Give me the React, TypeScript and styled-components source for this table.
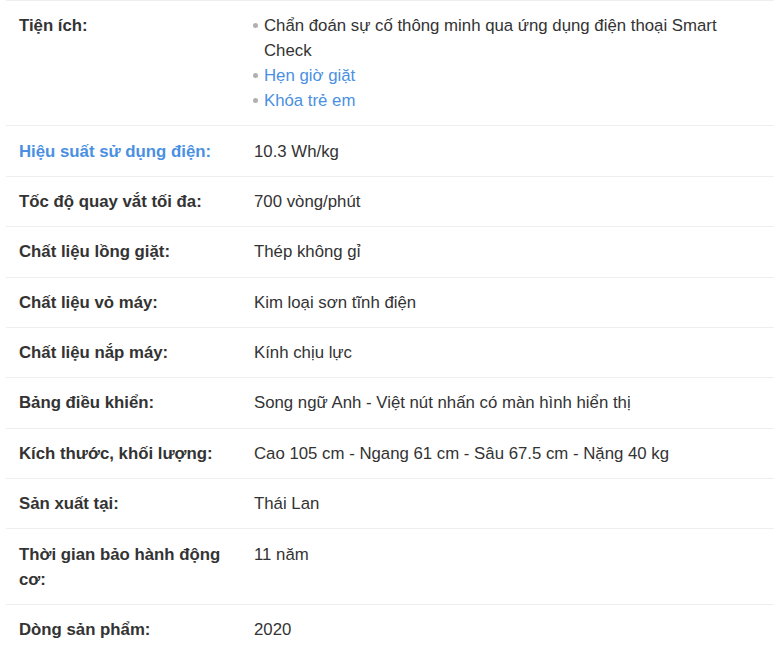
import React from "react";
import styled, { createGlobalStyle } from "styled-components";

const GlobalStyle = createGlobalStyle`
  html, body { margin: 0; padding: 0; background: #fff; }
  body { font-family: "Liberation Sans", Arial, sans-serif; }
`;

const Wrapper = styled.div`
  padding: 0 3px 0 6px;
`;

const Table = styled.div`
  border-top: 1px solid #eeeeee;
  width: 768px;
`;

const Row = styled.div`
  display: grid;
  grid-template-columns: 235px 1fr;
  border-bottom: 1px solid #eeeeee;
`;

const Label = styled.div<{ $link?: boolean }>`
  padding: 12.2px 12px 12.2px 13px;
  font-size: 16.8px;
  line-height: 25px;
  font-weight: 700;
  color: ${(p) => (p.$link ? "#4a90e2" : "#333333")};
`;

const Value = styled.div`
  padding: 12.2px 11px 12.2px 13px;
  font-size: 16.8px;
  line-height: 25px;
  color: #333333;
`;

const List = styled.ul`
  list-style: none;
  margin: 0;
  padding: 0;
`;

const Item = styled.li<{ $link?: boolean }>`
  position: relative;
  padding-left: 10px;
  color: ${(p) => (p.$link ? "#4a90e2" : "#333333")};
  &::before {
    content: "";
    position: absolute;
    left: -1px;
    top: 10px;
    width: 5px;
    height: 5px;
    border-radius: 50%;
    background: #b0b0b0;
  }
`;

const rows: { label: string; value: string; link?: boolean }[] = [
  { label: "Hiệu suất sử dụng điện:", value: "10.3 Wh/kg", link: true },
  { label: "Tốc độ quay vắt tối đa:", value: "700 vòng/phút" },
  { label: "Chất liệu lồng giặt:", value: "Thép không gỉ" },
  { label: "Chất liệu vỏ máy:", value: "Kim loại sơn tĩnh điện" },
  { label: "Chất liệu nắp máy:", value: "Kính chịu lực" },
  { label: "Bảng điều khiển:", value: "Song ngữ Anh - Việt nút nhấn có màn hình hiển thị" },
  { label: "Kích thước, khối lượng:", value: "Cao 105 cm - Ngang 61 cm - Sâu 67.5 cm - Nặng 40 kg" },
  { label: "Sản xuất tại:", value: "Thái Lan" },
  { label: "Thời gian bảo hành động cơ:", value: "11 năm" },
  { label: "Dòng sản phẩm:", value: "2020" },
];

export default function App() {
  return (
    <>
      <GlobalStyle />
      <Wrapper>
        <Table>
          <Row>
            <Label>Tiện ích:</Label>
            <Value>
              <List>
                <Item>Chẩn đoán sự cố thông minh qua ứng dụng điện thoại Smart Check</Item>
                <Item $link>Hẹn giờ giặt</Item>
                <Item $link>Khóa trẻ em</Item>
              </List>
            </Value>
          </Row>
          {rows.map((r) => (
            <Row key={r.label}>
              <Label $link={r.link}>{r.label}</Label>
              <Value>{r.value}</Value>
            </Row>
          ))}
        </Table>
      </Wrapper>
    </>
  );
}
